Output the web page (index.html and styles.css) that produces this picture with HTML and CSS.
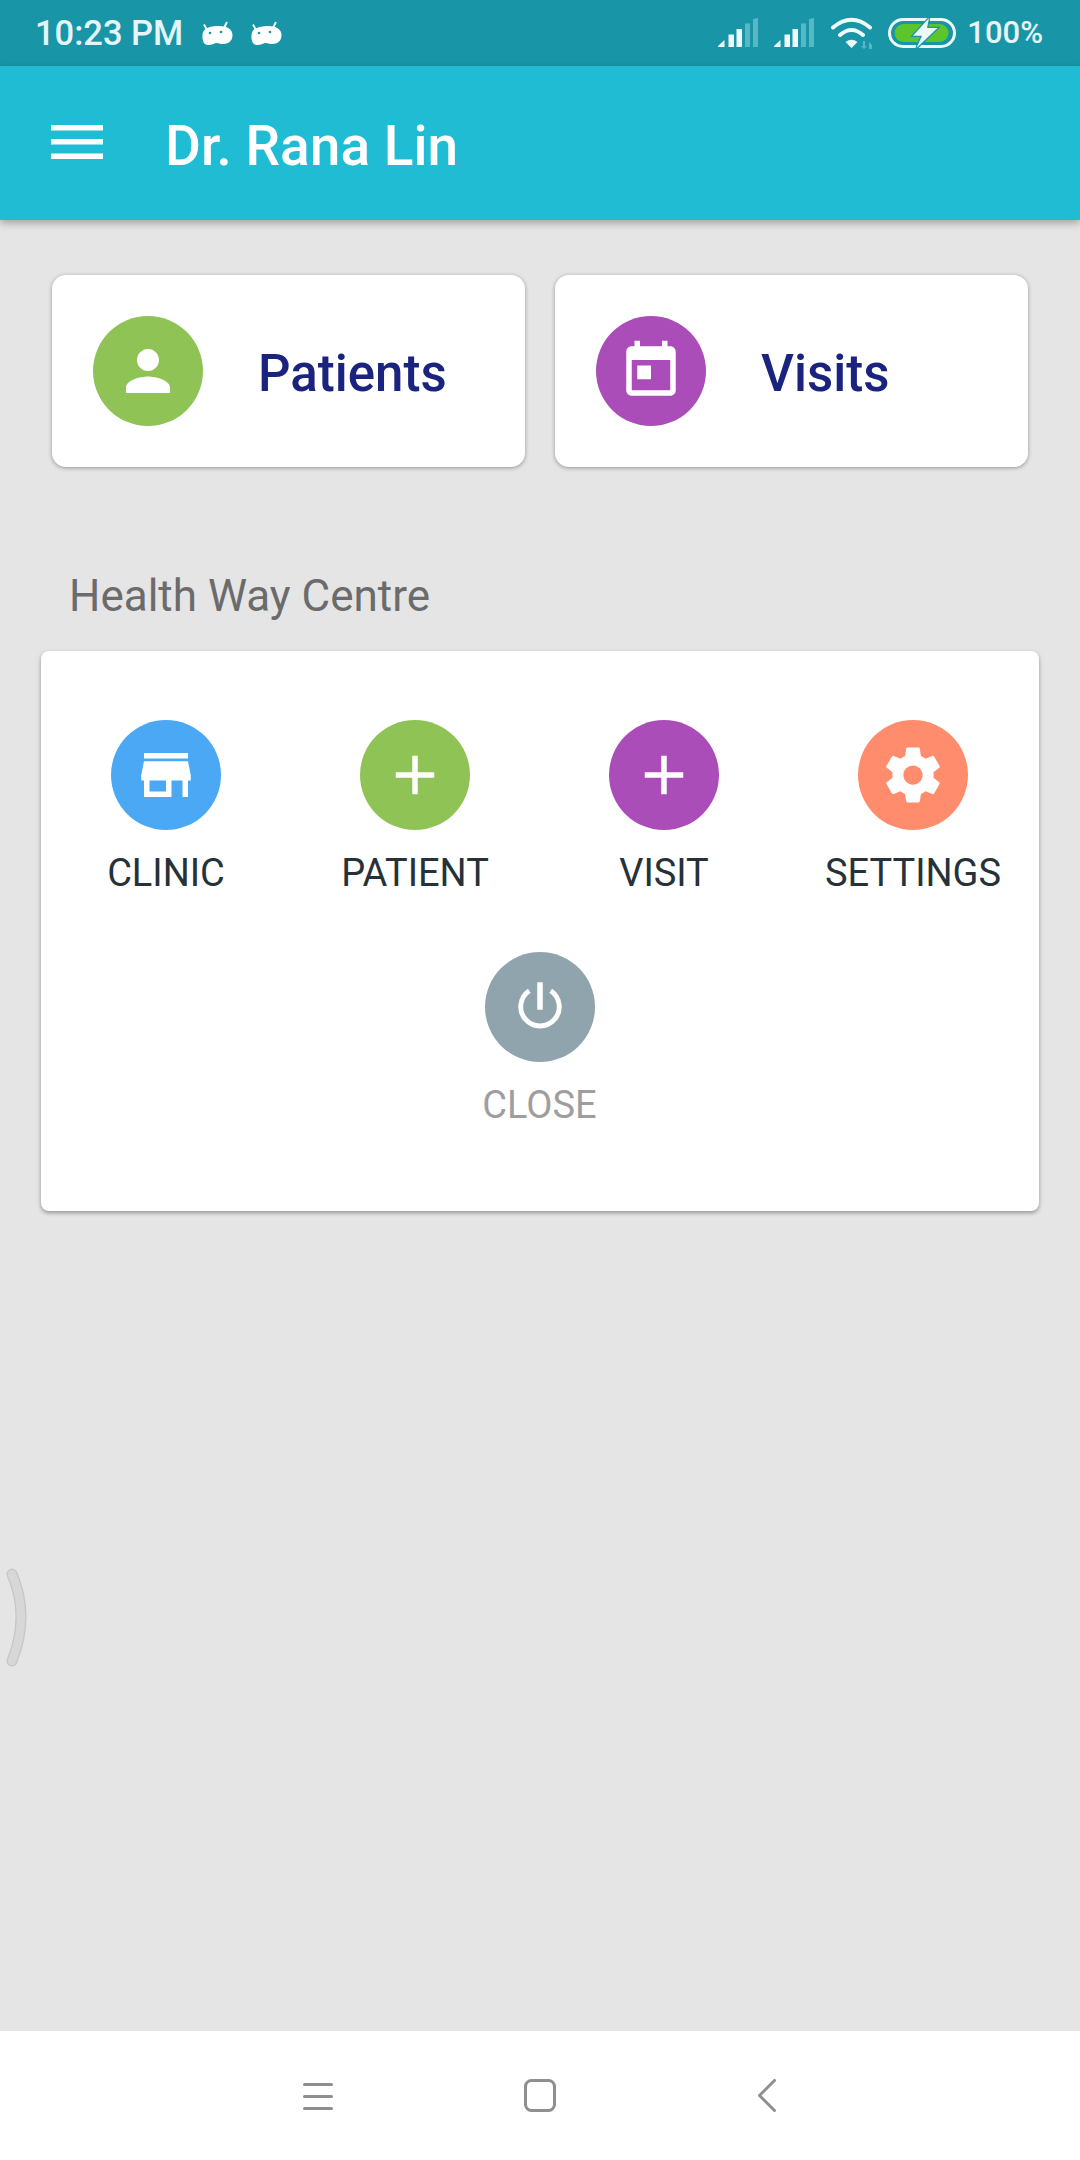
FILE: index.html
```html
<!DOCTYPE html>
<html lang="en">
<head>
<meta charset="utf-8">
<title>Dr. Rana Lin</title>
<link rel="stylesheet" href="styles.css">
</head>
<body>
<div class="screen">
  <header class="status">
    <span class="time">10:23 PM</span>
    <svg class="bot bot-first" viewBox="0 0 31 25"><use href="#bot"/></svg>
    <svg class="bot" viewBox="0 0 31 25"><use href="#bot"/></svg>
    <span class="status-spacer"></span>
    <svg class="signal" viewBox="0 0 40 29"><path class="on" d="M0 29v-1l6.500-6v7zM10.500 29v-12.500h5.500v12.500zM18.500 29v-18h5.500v18z"/><path class="dim" d="M27 29V5.500h5V29zM35 29V1l5-1v29z"/></svg>
    <svg class="signal signal-second" viewBox="0 0 40 29"><path class="on" d="M0 29v-1l6.500-6v7zM10.500 29v-12.500h5.500v12.500zM18.500 29v-18h5.500v18z"/><path class="dim" d="M27 29V5.500h5V29zM35 29V1l5-1v29z"/></svg>
    <svg class="wifi" viewBox="0 0 44 33"><path class="wifi-arc" d="M2 10.500Q20.500 -5 39 10.500M9 18Q20.500 8 32 18"/><path class="on" d="M14.500 25Q20.500 20.500 26.500 25L20.500 31z"/><path class="dim" d="M32 24h2v5h2l-3 3-3-3h2zM38 32v-7l3 3v4z"/></svg>
    <svg class="battery" viewBox="0 0 68 30"><rect class="batt-line" x="1.500" y="1.500" width="65" height="27" rx="13.500"/><rect class="batt-fill" x="6.500" y="6" width="54" height="18" rx="9"/><path class="batt-bolt" d="M41 0L25 17.700H34L28.500 30 49.500 10H39z"/></svg>
    <span class="pct">100%</span>
  </header>

  <div class="appbar">
    <svg class="menu-icon" viewBox="0 0 52 34"><path d="M0 0h52v5.500H0zM0 14h52v5.500H0zM0 28.500h52V34H0z"/></svg>
    <h1 class="title">Dr. Rana Lin</h1>
  </div>

  <main class="content">
    <div class="summary">
      <div class="card">
        <span class="disc green"><svg class="glyph" viewBox="0 0 24 24"><path d="M12 12c2.210 0 4-1.790 4-4s-1.790-4-4-4-4 1.790-4 4 1.790 4 4 4zm0 2c-2.670 0-8 1.340-8 4v2h16v-2c0-2.660-5.330-4-8-4z"/></svg></span>
        <span class="card-label">Patients</span>
      </div>
      <div class="card">
        <span class="disc purple"><svg class="glyph" viewBox="0 0 24 24"><path d="M19 3h-1V1h-2v2H8V1H6v2H5c-1.110 0-1.990.9-1.990 2L3 19c0 1.100.89 2 2 2h14c1.100 0 2-.9 2-2V5c0-1.100-.9-2-2-2zm0 16H5V8h14v11zM7 10h5v5H7z"/></svg></span>
        <span class="card-label">Visits</span>
      </div>
    </div>

    <h2 class="section">Health Way Centre</h2>

    <section class="panel">
      <div class="action">
        <span class="disc blue"><svg class="glyph" viewBox="0 0 24 24"><path d="M20 4H4v2h16V4zm1 10v-2l-1-5H4l-1 5v2h1v6h10v-6h4v6h2v-6h1zm-9 4H6v-4h6v4z"/></svg></span>
        <span class="action-label">CLINIC</span>
      </div>
      <div class="action">
        <span class="disc green"><svg class="glyph" viewBox="0 0 24 24"><path d="M19 13h-6v6h-2v-6H5v-2h6V5h2v6h6v2z"/></svg></span>
        <span class="action-label">PATIENT</span>
      </div>
      <div class="action">
        <span class="disc purple"><svg class="glyph" viewBox="0 0 24 24"><path d="M19 13h-6v6h-2v-6H5v-2h6V5h2v6h6v2z"/></svg></span>
        <span class="action-label">VISIT</span>
      </div>
      <div class="action">
        <span class="disc coral"><svg class="glyph" viewBox="0 0 24 24"><path d="M19.430 12.980c.04-.32.07-.64.07-.98s-.03-.66-.07-.98l2.110-1.650c.19-.15.24-.42.12-.64l-2-3.460c-.12-.22-.39-.3-.61-.22l-2.490 1c-.52-.4-1.080-.73-1.690-.98l-.38-2.650C14.460 2.180 14.250 2 14 2h-4c-.25 0-.46.18-.49.42l-.38 2.650c-.61.25-1.170.59-1.690.98l-2.490-1c-.23-.09-.49 0-.61.22l-2 3.460c-.13.22-.07.49.12.64l2.110 1.650c-.04.32-.07.65-.07.98s.03.66.07.98l-2.110 1.650c-.19.15-.24.42-.12.64l2 3.460c.12.22.39.3.61.22l2.490-1c.52.4 1.080.73 1.690.98l.38 2.650c.03.24.24.42.49.42h4c.25 0 .46-.18.49-.42l.38-2.650c.61-.25 1.170-.59 1.690-.98l2.490 1c.23.09.49 0 .61-.22l2-3.460c.12-.22.07-.49-.12-.64l-2.110-1.650zM12 15.500c-1.930 0-3.500-1.570-3.500-3.500s1.570-3.500 3.500-3.500 3.500 1.570 3.500 3.500-1.570 3.500-3.500 3.500z"/></svg></span>
        <span class="action-label">SETTINGS</span>
      </div>
      <div class="action action-close">
        <span class="disc slate"><svg class="glyph" viewBox="0 0 24 24"><path d="M11 3h2v10h-2z"/><path class="power-arc" d="M8.100 6.100A7 7 0 1 0 15.900 6.100"/></svg></span>
        <span class="action-label muted">CLOSE</span>
      </div>
    </section>
  </main>

  <nav class="navbar">
    <svg class="nav-menu" viewBox="0 0 30 28"><path d="M1.500 2.500h27M1.500 14.500h27M1.500 26.500h27"/></svg>
    <svg class="nav-home" viewBox="0 0 32 33"><rect x="1.500" y="1.500" width="29" height="30" rx="6"/></svg>
    <svg class="nav-back" viewBox="0 0 18 33"><path d="M16.500 1.500L1.500 16.500l15 15"/></svg>
  </nav>

  <svg class="edge-handle" viewBox="0 0 30 104"><path class="edge-outer" d="M10 8Q28 50 10 95"/><path class="edge-inner" d="M10 8Q28 50 10 95"/></svg>

  <svg class="defs" width="0" height="0"><defs><g id="bot"><path fill="#fff" d="M0.500 15C0.500 9.500 6 6.500 15 6 24 5.500 30.500 8.500 30.500 15 30.500 21 26.500 24 21 24 18 24 16 22.500 14 23 12 23.500 10 25 6 25 2 25 0 21 0.500 15Z"/><path stroke="#fff" stroke-width="1.800" d="M5 10L2 4.500M22 8L25 2"/><circle fill="#1896a8" cx="8" cy="13" r="1.300"/><circle fill="#1896a8" cx="19" cy="12" r="1.300"/></g></defs></svg>
</div>
</body>
</html>
```

FILE: styles.css
```css
* {
  box-sizing: border-box;
}

html,
body {
  margin: 0;
  padding: 0;
}

body {
  font-family: Roboto, "Liberation Sans", sans-serif;
}

.screen {
  position: relative;
  display: flex;
  flex-direction: column;
  width: 1080px;
  height: 2160px;
  overflow: hidden;
  background: #e5e5e5;
}

/* status bar */
.status {
  display: flex;
  align-items: center;
  height: 66px;
  flex: none;
  padding: 0 37px 0 35px;
  background: #1896a8;
  color: #e6f5f7;
}

.time,
.pct {
  font-weight: 500;
  line-height: 66px;
}

.time {
  font-size: 34.500px;
}

.pct {
  margin-left: 11px;
  font-size: 31px;
}

.bot {
  width: 31px;
  height: 25px;
  margin-left: 18px;
  margin-top: -2px;
}

.bot-first {
  margin-left: 19px;
}

.status-spacer {
  flex: 1;
}

.signal {
  width: 40px;
  height: 29px;
  margin-top: -1px;
}

.signal-second {
  margin-left: 16px;
}

.on {
  fill: #eef9fa;
}

.dim {
  fill: #57b7c4;
}

.wifi {
  width: 44px;
  height: 33px;
  margin-left: 17px;
  margin-top: 1px;
}

.wifi-arc {
  fill: none;
  stroke: #eef9fa;
  stroke-width: 4;
  stroke-linecap: round;
}

.battery {
  width: 68px;
  height: 30px;
  margin-left: 13px;
  overflow: visible;
}

.batt-line {
  fill: none;
  stroke: #eef9fa;
  stroke-width: 3;
}

.batt-fill {
  fill: #5bc52b;
}

.batt-bolt {
  fill: #eef9fa;
  stroke: #1896a8;
  stroke-width: 2.500;
  paint-order: stroke;
}

/* app bar */
.appbar {
  position: relative;
  z-index: 1;
  display: flex;
  align-items: center;
  flex: none;
  height: 154px;
  padding-left: 51px;
  background: #20bcd4;
  box-shadow: 0 3px 8px rgba(0, 0, 0, 0.3);
}

.menu-icon {
  width: 52px;
  height: 34px;
  margin-bottom: 2px;
  fill: #fff;
}

.title {
  margin: 5px 0 0 62px;
  color: #fff;
  font-size: 55px;
  font-weight: 500;
  line-height: 66px;
}

/* content */
.content {
  flex: 1;
  min-height: 0;
  padding: 55px 41px 0;
}

.summary {
  display: flex;
  gap: 30px;
  padding: 0 11px;
}

.card {
  display: flex;
  align-items: center;
  width: 473px;
  height: 192px;
  padding-left: 41px;
  background: #fff;
  border-radius: 14px;
  box-shadow: 0 1px 4px rgba(0, 0, 0, 0.35);
}

.card-label {
  margin: 5px 0 0 55px;
  color: #1a237e;
  font-size: 51px;
  font-weight: 500;
  line-height: 60px;
}

.disc {
  display: flex;
  align-items: center;
  justify-content: center;
  flex: none;
  width: 110px;
  height: 110px;
  border-radius: 50%;
}

.green {
  background: #8fc355;
}

.purple {
  background: #ab4db8;
}

.blue {
  background: #4aa8f5;
}

.coral {
  background: #ff8c6c;
}

.slate {
  background: #90a4ae;
}

.glyph {
  width: 66px;
  height: 66px;
  fill: #fff;
}

.power-arc {
  fill: none;
  stroke: #fff;
  stroke-width: 1.800;
}

.section {
  margin: 99px 0 0 28px;
  color: #6b6b6b;
  font-size: 44px;
  font-weight: 400;
  line-height: 60px;
}

.panel {
  display: grid;
  grid-template-columns: repeat(4, 249px);
  align-content: start;
  height: 560px;
  margin-top: 25px;
  padding: 69px 0 0 0.500px;
  background: #fff;
  border-radius: 8px;
  box-shadow: 0 2px 4px rgba(0, 0, 0, 0.35);
}

.action {
  display: flex;
  flex-direction: column;
  align-items: center;
  height: 232px;
}

.action-close {
  grid-column: 1 / -1;
  height: auto;
}

.action-label {
  margin-top: 18px;
  color: #263238;
  font-size: 38px;
  line-height: 50px;
}

.muted {
  color: #9e9e9e;
}

/* navigation */
.navbar {
  display: flex;
  align-items: center;
  flex: none;
  height: 129px;
  padding-left: 303px;
  background: #fff;
}

.navbar svg {
  fill: none;
  stroke: #8f8f8f;
  stroke-width: 3;
  stroke-linecap: round;
  stroke-linejoin: round;
}

.nav-menu {
  width: 30px;
  height: 28px;
}

.nav-home {
  width: 32px;
  height: 33px;
  margin-left: 191px;
}

.nav-back {
  width: 18px;
  height: 33px;
  margin-left: 202px;
}

.edge-handle {
  position: absolute;
  left: 2px;
  top: 1566px;
  width: 30px;
  height: 104px;
  fill: none;
  stroke-linecap: round;
}

.edge-outer {
  stroke: #c6c6c6;
  stroke-width: 11;
}

.edge-inner {
  stroke: #d7d7d7;
  stroke-width: 8.500;
}

.defs {
  position: absolute;
}
```
